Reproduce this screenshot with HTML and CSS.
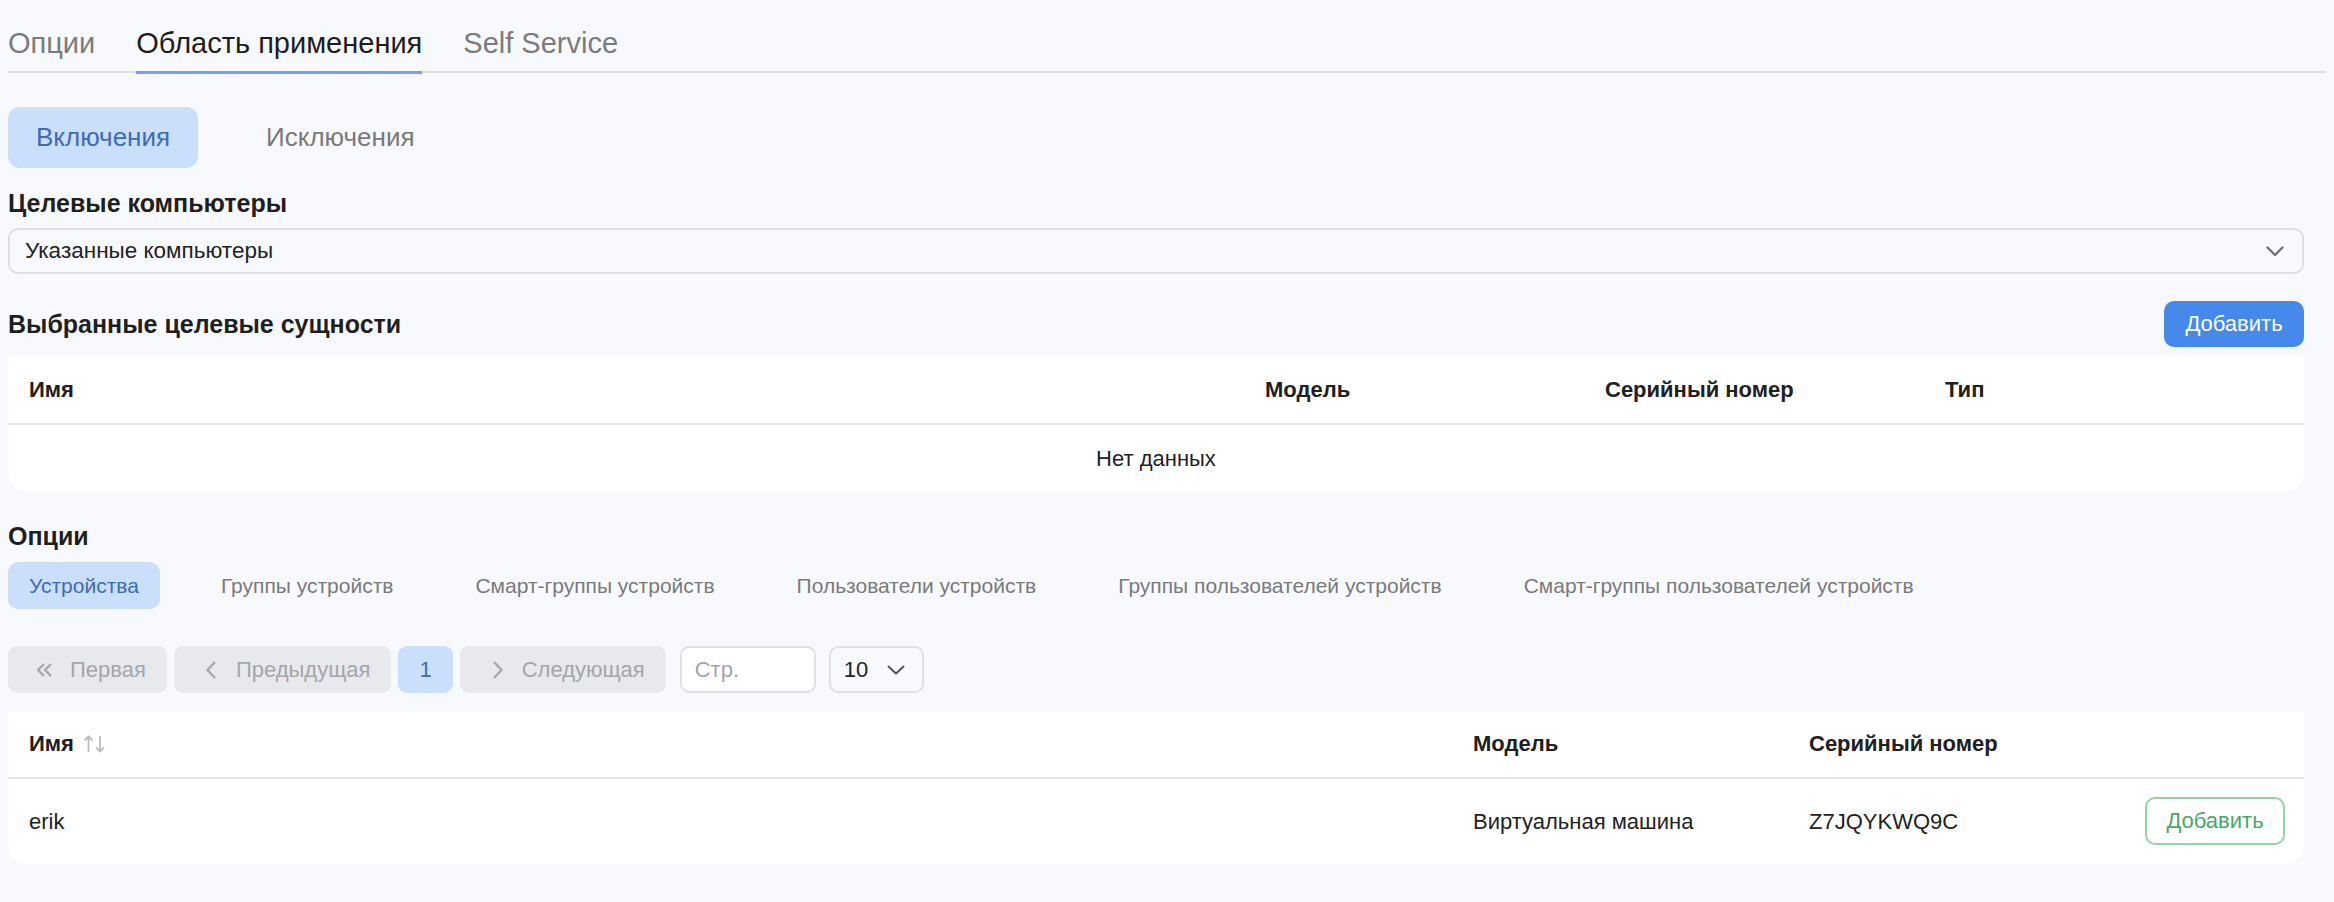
FILE: index.html
```html
<!DOCTYPE html>
<html lang="ru">
<head>
    <meta charset="UTF-8">
    <meta name="viewport" content="width=device-width, initial-scale=1.0">
    <title>Область применения</title>
    <link rel="stylesheet" href="styles.css">
</head>
<body>
    <div class="page">
        <!-- Policy tabs -->
        <nav class="tabs">
            <a href="#" class="tab">Опции</a>
            <a href="#" class="tab active">Область применения</a>
            <a href="#" class="tab">Self Service</a>
        </nav>

        <!-- Inclusions / exclusions -->
        <div class="pills scope-switch">
            <button class="pill active">Включения</button>
            <button class="pill">Исключения</button>
        </div>

        <h3 class="section-title">Целевые компьютеры</h3>
        <div class="select">
            <span>Указанные компьютеры</span>
            <svg class="select-arrow" width="18" height="11" viewBox="0 0 18 11">
                <path d="M1.5 1.5 L9 9 L16.5 1.5" fill="none" stroke="#707070" stroke-width="2.4" stroke-linecap="round" stroke-linejoin="round"/>
            </svg>
        </div>

        <div class="section-head">
            <h3 class="section-title">Выбранные целевые сущности</h3>
            <button class="btn-primary">Добавить</button>
        </div>

        <table class="data-table targets">
            <colgroup>
                <col>
                <col class="col-340">
                <col class="col-340">
                <col class="col-380">
            </colgroup>
            <thead>
                <tr>
                    <th>Имя</th>
                    <th>Модель</th>
                    <th>Серийный номер</th>
                    <th>Тип</th>
                </tr>
            </thead>
            <tbody>
                <tr>
                    <td colspan="4" class="empty">Нет данных</td>
                </tr>
            </tbody>
        </table>

        <h3 class="section-title options-title">Опции</h3>
        <div class="pills sub-tabs">
            <button class="pill small active">Устройства</button>
            <button class="pill small">Группы устройств</button>
            <button class="pill small">Смарт-группы устройств</button>
            <button class="pill small">Пользователи устройств</button>
            <button class="pill small">Группы пользователей устройств</button>
            <button class="pill small">Смарт-группы пользователей устройств</button>
        </div>

        <!-- Pagination -->
        <div class="pager">
            <button class="page-btn">
                <svg width="24" height="24" viewBox="0 0 24 24"><path d="M15 6 L9 12 L15 18 M22 6 L16 12 L22 18" fill="none" stroke="#a6a6ab" stroke-width="2.4" stroke-linejoin="round"/></svg>
                Первая
            </button>
            <button class="page-btn">
                <svg width="24" height="24" viewBox="0 0 24 24"><path d="M20 4 L12.5 12 L20 20" fill="none" stroke="#a6a6ab" stroke-width="2.4" stroke-linejoin="round"/></svg>
                Предыдущая
            </button>
            <button class="page-btn current">1</button>
            <button class="page-btn">
                <svg width="24" height="24" viewBox="0 0 24 24"><path d="M13 4 L20.5 12 L13 20" fill="none" stroke="#a6a6ab" stroke-width="2.4" stroke-linejoin="round"/></svg>
                Следующая
            </button>
            <input class="page-input" type="text" placeholder="Стр.">
            <div class="page-size">
                <span>10</span>
                <svg width="18" height="10" viewBox="0 0 18 10"><path d="M1.5 1.5 L9 8.5 L16.5 1.5" fill="none" stroke="#555" stroke-width="2" stroke-linecap="round" stroke-linejoin="round"/></svg>
            </div>
        </div>

        <table class="data-table devices">
            <colgroup>
                <col>
                <col class="col-336">
                <col class="col-336">
                <col class="col-180">
            </colgroup>
            <thead>
                <tr>
                    <th>Имя
                        <svg class="sort" width="24" height="18" viewBox="0 0 24 18"><path d="M5.5 17 V1.5 M1.5 5.5 L5.5 1.5 L9.5 5.5 M17 1 V16.5 M13 12.5 L17 16.5 L21 12.5" fill="none" stroke="#bdbdbd" stroke-width="1.8"/></svg>
                    </th>
                    <th>Модель</th>
                    <th>Серийный номер</th>
                    <th></th>
                </tr>
            </thead>
            <tbody>
                <tr>
                    <td>erik</td>
                    <td>Виртуальная машина</td>
                    <td>Z7JQYKWQ9C</td>
                    <td class="actions"><button class="btn-outline">Добавить</button></td>
                </tr>
            </tbody>
        </table>
    </div>
</body>
</html>
```

FILE: styles.css
```css
/* Page */
body {
    margin: 0;
    background: #f8f9fd;
    font-family: "Liberation Sans", Arial, sans-serif;
    color: #222;
}

.page {
    padding: 0 30px 0 8px;
}

button {
    font-family: inherit;
    border: none;
    cursor: pointer;
}

/* Top tabs */
.tabs {
    display: flex;
    gap: 41px;
    padding-top: 25px;
    margin-right: -22px;
    border-bottom: 2px solid #dfe0e6;
}

.tab {
    font-size: 29px;
    line-height: 36px;
    padding-bottom: 10px;
    margin-bottom: -3px;
    border-bottom: 3px solid transparent;
    color: #7b7b7b;
    text-decoration: none;
}

.tab.active {
    color: #1d1d1d;
    border-bottom-color: #7d9df2;
}

/* Pill switches */
.pills {
    display: flex;
    gap: 40px;
}

.pill {
    background: none;
    color: #7a7a7a;
    font-size: 26px;
    line-height: 29px;
    padding: 16px 28px;
    border-radius: 12px;
}

.pill.active {
    background: #c9dffb;
    color: #3e6cb4;
}

.pill.small {
    font-size: 21px;
    line-height: 25px;
    padding: 11px 21px;
    border-radius: 10px;
}

.scope-switch {
    margin-top: 34px;
}

.sub-tabs {
    margin-top: 11px;
}

/* Section headings */
.section-title {
    margin: 20px 0 0;
    font-size: 25px;
    line-height: 30px;
    font-weight: bold;
    color: #1f1f1f;
}

.options-title {
    margin-top: 29px;
}

.section-head {
    display: flex;
    justify-content: space-between;
    align-items: center;
    margin-top: 27px;
}

.section-head .section-title {
    margin: 0;
}

/* Select */
.select {
    display: flex;
    justify-content: space-between;
    align-items: center;
    margin-top: 10px;
    padding: 0 18px 0 15px;
    border: 2px solid #dddee3;
    border-radius: 10px;
    font-size: 22.5px;
    line-height: 42px;
    color: #222;
}

/* Buttons */
.btn-primary {
    background: #4589ea;
    color: #fff;
    font-size: 22px;
    line-height: 26px;
    padding: 10px 20px;
    border-radius: 10px;
    width: 140px;
}

.btn-outline {
    background: #fff;
    color: #4aa865;
    border: 2px solid #93d3a6;
    font-size: 22px;
    line-height: 26px;
    padding: 9px 0;
    width: 140px;
    border-radius: 10px;
}

/* Tables */
.data-table {
    width: 100%;
    table-layout: fixed;
    border-collapse: separate;
    border-spacing: 0;
    background: #fff;
    border-radius: 0 0 20px 20px;
}

.col-340 { width: 340px; }
.col-380 { width: 380px; }
.col-336 { width: 336px; }
.col-180 { width: 180px; }

.data-table th {
    text-align: left;
    font-size: 22px;
    line-height: 24px;
    font-weight: bold;
    color: #202020;
    padding: 21px 21px;
    border-bottom: 2px solid #e6e6e8;
}

.data-table td {
    font-size: 22px;
    line-height: 25px;
    padding: 21px 21px;
    color: #222;
}

.targets {
    margin-top: 10px;
}

.targets td.empty {
    text-align: center;
}

.devices {
    margin-top: 19px;
}

.devices th {
    padding: 20px 21px 21px;
}

.devices td {
    padding: 18px 21px 19px;
}

.devices td.actions {
    text-align: right;
}

.sort {
    vertical-align: -2px;
    margin-left: 3px;
}

/* Pagination */
.pager {
    display: flex;
    align-items: center;
    margin-top: 37px;
}

.page-btn {
    display: flex;
    align-items: center;
    gap: 17px;
    background: #e8e9ed;
    color: #a5a5aa;
    font-size: 22px;
    line-height: 25px;
    padding: 11px 21px;
    border-radius: 9px;
    margin-right: 7px;
}

.page-btn.current {
    background: #c9dffb;
    color: #3e6cb4;
}

.page-input {
    margin-left: 7px;
    width: 136px;
    box-sizing: border-box;
    font-family: inherit;
    font-size: 22px;
    line-height: 25px;
    padding: 9px 13px;
    border: 2px solid #e0e1e5;
    border-radius: 9px;
    background: #fff;
    color: #222;
}

.page-input::placeholder {
    color: #a5a5aa;
}

.page-size {
    display: flex;
    align-items: center;
    justify-content: space-between;
    margin-left: 13px;
    width: 95px;
    box-sizing: border-box;
    padding: 9px 17px 9px 13px;
    border: 2px solid #e0e1e5;
    border-radius: 9px;
    font-size: 22px;
    line-height: 25px;
    color: #222;
}
```
